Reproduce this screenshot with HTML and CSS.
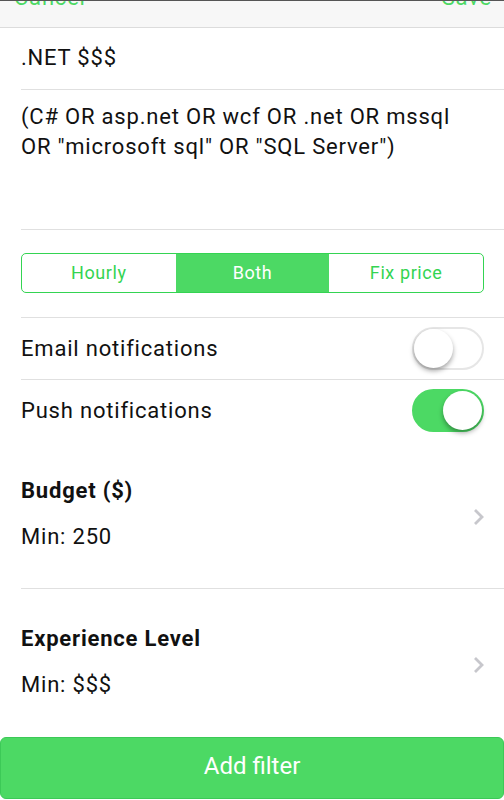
FILE: index.html
```html
<!DOCTYPE html>
<html lang="en">
  <head>
    <meta charset="UTF-8" />
    <title>Edit filter</title>
    <link rel="stylesheet" href="styles.css">
  </head>
  <body>
    <div class="navbar">
      <span class="nav-btn">Cancel</span>
      <span class="nav-btn">Save</span>
    </div>

    <div class="form">
      <div class="row title-row">.NET $$$</div>
      <div class="row query-row">(C# OR asp.net OR wcf OR .net OR mssql OR "microsoft sql" OR "SQL Server")</div>

      <div class="row segment-row">
        <div class="segment">
          <div class="seg-item">Hourly</div>
          <div class="seg-item active">Both</div>
          <div class="seg-item">Fix price</div>
        </div>
      </div>

      <div class="row switch-row">
        <span>Email notifications</span>
        <div class="switch"><div class="knob"></div></div>
      </div>
      <div class="row switch-row no-line">
        <span>Push notifications</span>
        <div class="switch on"><div class="knob"></div></div>
      </div>

      <div class="row range-row">
        <div class="range-text">
          <div class="range-title">Budget ($)</div>
          <div class="range-value">Min: 250</div>
        </div>
        <svg class="chevron" width="12" height="18" viewBox="0 0 12 18">
          <path d="M2 2 L9 9 L2 16" fill="none" stroke="#c7c7cc" stroke-width="2.8" />
        </svg>
      </div>
      <div class="row range-row no-line">
        <div class="range-text">
          <div class="range-title">Experience Level</div>
          <div class="range-value">Min: $$$</div>
        </div>
        <svg class="chevron" width="12" height="18" viewBox="0 0 12 18">
          <path d="M2 2 L9 9 L2 16" fill="none" stroke="#c7c7cc" stroke-width="2.8" />
        </svg>
      </div>
    </div>

    <button class="add-btn">Add filter</button>
  </body>
</html>
```

FILE: styles.css
```css
body {
  margin: 0;
  font-family: Roboto, "Noto Sans", Arial, sans-serif;
  background: white;
  color: #111;
  width: 504px;
  height: 800px;
  overflow: hidden;
}
.navbar {
  background: #f7f7f7;
  border-top: 1px solid #555;
  border-bottom: 1px solid #dcdcdc;
  box-sizing: border-box;
  height: 28px;
  display: flex;
  justify-content: space-between;
  padding: 0 12px 0 14px;
  overflow: hidden;
}
.nav-btn {
  color: #4cd964;
  font-size: 22px;
  line-height: 22px;
  letter-spacing: 0.8px;
  margin-top: -14px;
}
.form {
  padding-left: 21px;
}
.row {
  border-bottom: 1px solid #e0e0e0;
  font-size: 22px;
  letter-spacing: 0.8px;
  padding-right: 20px;
}
.no-line {
  border-bottom: none;
}
.title-row {
  height: 61px;
  display: flex;
  align-items: center;
  padding-bottom: 2px;
  box-sizing: border-box;
  height: 62px;
}
.query-row {
  height: 140px;
  box-sizing: border-box;
  padding-top: 12px;
  line-height: 30px;
}
.segment-row {
  padding-top: 23px;
  padding-bottom: 24px;
}
.segment {
  display: flex;
  height: 40px;
  box-sizing: border-box;
  border: 1px solid #34d452;
  border-radius: 5px;
  overflow: hidden;
}
.seg-item {
  flex: 1;
  display: flex;
  align-items: center;
  justify-content: center;
  color: #34d452;
  font-size: 18px;
  letter-spacing: 0.6px;
  padding-bottom: 2px;
}
.seg-item.active {
  background: #4cd964;
  color: white;
}
.switch-row {
  height: 61px;
  display: flex;
  align-items: center;
  justify-content: space-between;
}
.switch {
  width: 72px;
  height: 43px;
  box-sizing: border-box;
  border: 2px solid #e6e6e6;
  border-radius: 22px;
  background: white;
  display: flex;
  align-items: center;
}
.knob {
  width: 39px;
  height: 39px;
  border-radius: 50%;
  background: white;
  box-shadow: 0 3px 5px rgba(0, 0, 0, 0.35);
}
.switch.on {
  background: #4cd964;
  border-color: #4cd964;
  justify-content: flex-end;
}
.range-row {
  height: 148px;
  box-sizing: border-box;
  padding-top: 35px;
  display: flex;
  align-items: flex-start;
  justify-content: space-between;
}
.range-text {
  display: flex;
  flex-direction: column;
  gap: 16px;
  line-height: 30px;
}
.range-title {
  font-weight: bold;
}
.chevron {
  margin-top: 32px;
  margin-right: -1px;
}
.add-btn {
  display: block;
  width: 504px;
  height: 62px;
  border: 1px solid #3cc957;
  border-radius: 6px;
  background: #4cd964;
  color: white;
  font-family: Roboto, "Noto Sans", Arial, sans-serif;
  font-size: 24px;
  padding-bottom: 6px;
}
```
